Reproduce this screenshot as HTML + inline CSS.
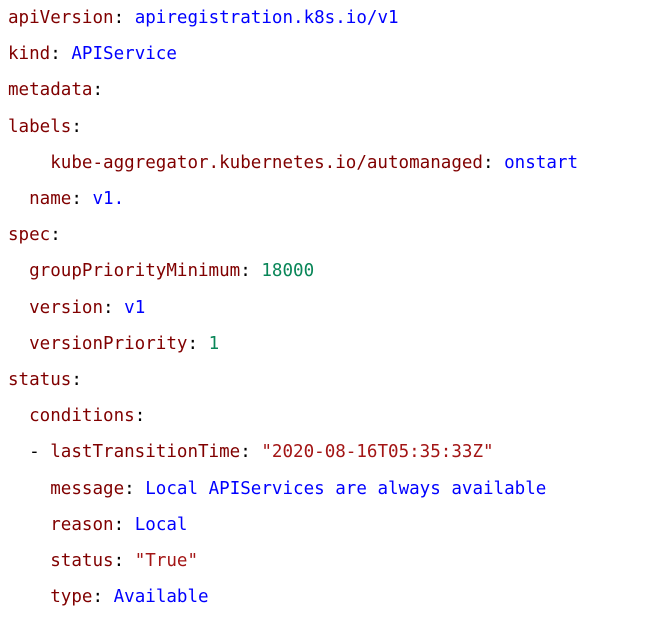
<!DOCTYPE html>
<html><head><style>
html,body{margin:0;background:#fff;}
pre{margin:0;position:absolute;left:8px;top:0px;font-family:"DejaVu Sans Mono","Liberation Mono",monospace;font-size:17.55px;line-height:36.2px;color:#000;}
.k{color:#800000}.v{color:#0000ff}.n{color:#098658}.s{color:#a31515}
</style></head><body>
<pre><span class="k">apiVersion</span>: <span class="v">apiregistration.k8s.io/v1</span>
<span class="k">kind</span>: <span class="v">APIService</span>
<span class="k">metadata</span>:
<span class="k">labels</span>:
    <span class="k">kube-aggregator.kubernetes.io/automanaged</span>: <span class="v">onstart</span>
  <span class="k">name</span>: <span class="v">v1.</span>
<span class="k">spec</span>:
  <span class="k">groupPriorityMinimum</span>: <span class="n">18000</span>
  <span class="k">version</span>: <span class="v">v1</span>
  <span class="k">versionPriority</span>: <span class="n">1</span>
<span class="k">status</span>:
  <span class="k">conditions</span>:
  - <span class="k">lastTransitionTime</span>: <span class="s">"2020-08-16T05:35:33Z"</span>
    <span class="k">message</span>: <span class="v">Local APIServices are always available</span>
    <span class="k">reason</span>: <span class="v">Local</span>
    <span class="k">status</span>: <span class="s">"True"</span>
    <span class="k">type</span>: <span class="v">Available</span></pre>
</body></html>
